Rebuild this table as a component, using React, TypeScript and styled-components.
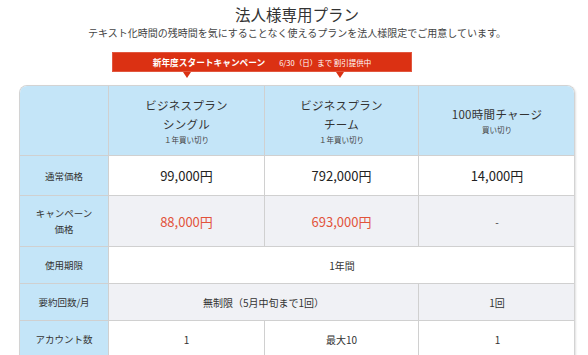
import styled, { createGlobalStyle } from "styled-components";

const GlobalStyle = createGlobalStyle`
  body {
    margin: 0;
    background: #ffffff;
    font-family: "Noto Sans CJK JP", "Noto Sans", sans-serif;
    color: #333333;
  }
`;

const Page = styled.div`
  width: 556px;
  padding: 4px 0 0 19px;
`;

const Title = styled.h1`
  margin: 0;
  text-align: center;
  font-size: 15.5px;
  font-weight: 400;
  line-height: 21px;
  color: #333;
`;

const Lead = styled.p`
  margin: 1px 0 0;
  text-align: center;
  font-size: 10px;
  line-height: 14px;
  color: #444;
`;

const BannerRow = styled.div`
  margin: 12px 0 0 93px;
  height: 20px;
  width: 300px;
  position: relative;
`;

const Banner = styled.div`
  height: 20px;
  background: #db3113;
  border: 1px solid #e2573f;
  box-sizing: border-box;
  color: #fff;
  display: flex;
  align-items: center;
  justify-content: center;
  gap: 14px;
`;

const Notch = styled.span<{ $left: number }>`
  position: absolute;
  top: 20px;
  left: ${(p) => p.$left}px;
  width: 0;
  height: 0;
  border-left: 4px solid transparent;
  border-right: 4px solid transparent;
  border-top: 6px solid #db3113;
`;

const BannerMain = styled.span`
  font-size: 8.7px;
  font-weight: 700;
`;

const BannerSub = styled.span`
  font-size: 7.5px;
`;

const Table = styled.div`
  margin-top: 13px;
  display: grid;
  grid-template-columns: 89px 156px 154px 157px;
  grid-template-rows: 70px 40px 51px 37px 37px 37px;
  border: 1px solid #d3d3d3;
  border-bottom: none;
  border-radius: 8px 8px 0 0;
  overflow: hidden;
  box-shadow: 1px 1px 2px rgba(0, 0, 0, 0.12);
`;

const Cell = styled.div<{ $bg?: string; $span?: number }>`
  display: flex;
  flex-direction: column;
  align-items: center;
  justify-content: center;
  text-align: center;
  background: ${(p) => p.$bg || "#ffffff"};
  border-right: 1px solid #d0d0d0;
  border-bottom: 1px solid #d0d0d0;
  grid-column: span ${(p) => p.$span || 1};
  box-sizing: border-box;
  &:last-child {
    border-right: none;
  }
`;

const HeadCell = styled(Cell)`
  background: #c4e5f8;
`;

const Label = styled(Cell)`
  background: #c4e5f8;
  font-size: 9.5px;
  line-height: 16px;
  color: #333;
`;

const PlanName = styled.div`
  font-size: 11.5px;
  line-height: 19px;
  letter-spacing: 0.3px;
  color: #333;
`;

const PlanNote = styled.div`
  font-size: 7.5px;
  line-height: 12px;
  color: #444;
`;

const Price = styled.div<{ $red?: boolean }>`
  font-size: 13px;
  color: ${(p) => (p.$red ? "#e2533b" : "#222")};
`;

const Value = styled.div`
  font-size: 10px;
  color: #333;
`;

const ROW_GREY = "#f0f1f5";

export default function App() {
  return (
    <Page>
      <GlobalStyle />
      <Title>法人様専用プラン</Title>
      <Lead>テキスト化時間の残時間を気にすることなく使えるプランを法人様限定でご用意しています。</Lead>
      <BannerRow>
        <Banner>
          <BannerMain>新年度スタートキャンペーン</BannerMain>
          <BannerSub>6/30（日）まで 割引提供中</BannerSub>
        </Banner>
        <Notch $left={71} />
        <Notch $left={224} />
      </BannerRow>
      <Table>
        <HeadCell />
        <HeadCell>
          <PlanName>ビジネスプラン</PlanName>
          <PlanName>シングル</PlanName>
          <PlanNote>１年買い切り</PlanNote>
        </HeadCell>
        <HeadCell>
          <PlanName>ビジネスプラン</PlanName>
          <PlanName>チーム</PlanName>
          <PlanNote>１年買い切り</PlanNote>
        </HeadCell>
        <HeadCell>
          <PlanName>100時間チャージ</PlanName>
          <PlanNote>買い切り</PlanNote>
        </HeadCell>

        <Label>通常価格</Label>
        <Cell><Price>99,000円</Price></Cell>
        <Cell><Price>792,000円</Price></Cell>
        <Cell><Price>14,000円</Price></Cell>

        <Label>キャンペーン<br />価格</Label>
        <Cell $bg={ROW_GREY}><Price $red>88,000円</Price></Cell>
        <Cell $bg={ROW_GREY}><Price $red>693,000円</Price></Cell>
        <Cell $bg={ROW_GREY}><Value>-</Value></Cell>

        <Label>使用期限</Label>
        <Cell $span={3}><Value>1年間</Value></Cell>

        <Label>要約回数/月</Label>
        <Cell $bg={ROW_GREY} $span={2}><Value>無制限（5月中旬まで1回）</Value></Cell>
        <Cell $bg={ROW_GREY}><Value>1回</Value></Cell>

        <Label>アカウント数</Label>
        <Cell><Value>1</Value></Cell>
        <Cell><Value>最大10</Value></Cell>
        <Cell><Value>1</Value></Cell>
      </Table>
    </Page>
  );
}
